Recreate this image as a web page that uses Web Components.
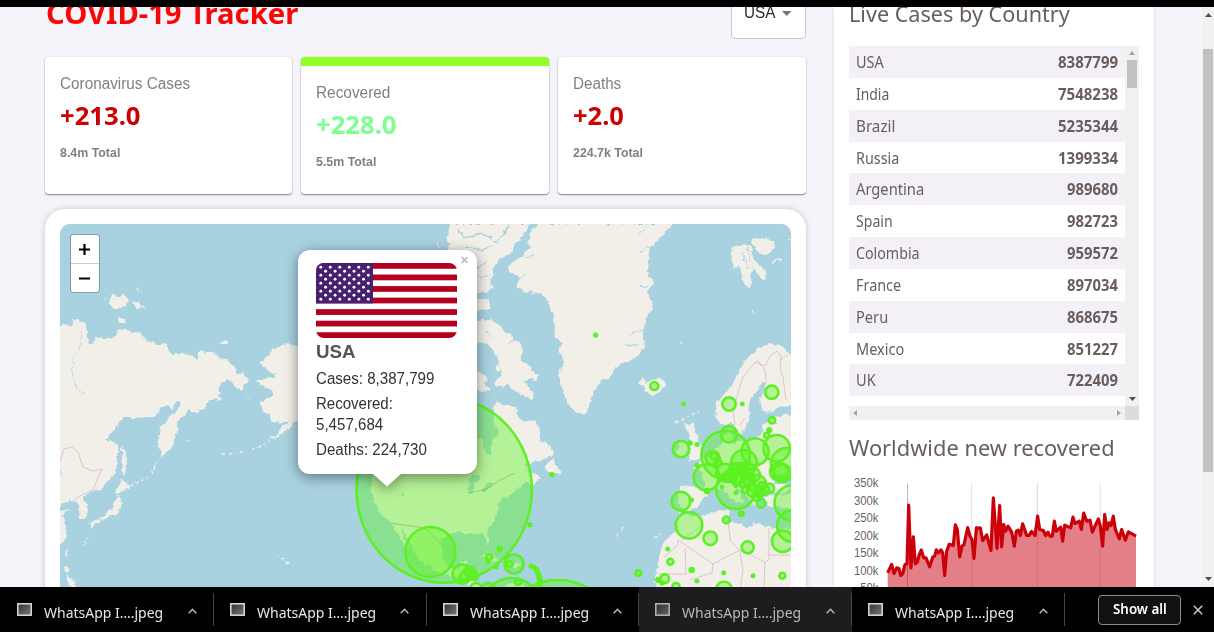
<!DOCTYPE html>
<html lang="en">
<head>
<meta charset="utf-8">
<title>COVID-19 Tracker</title>
<style>
html,body{margin:0;height:100%;overflow:hidden;background:#f5f4fa}
body{font-family:"Liberation Sans",Arial,sans-serif}
</style>
</head>
<body>
<tracker-app></tracker-app>
<script>
const UI = '"Noto Sans","Open Sans",sans-serif';
function define(name, html, setup) {
  const t = document.createElement('template');
  t.innerHTML = html;
  customElements.define(name, class extends HTMLElement {
    connectedCallback() {
      if (this.shadowRoot) return;
      this.attachShadow({mode: 'open'}).append(t.content.cloneNode(true));
      if (setup) setup.call(this, this.shadowRoot);
    }
  });
}

/* One line of text condensed to a given width. */
define('fit-text', `<style>
:host{display:block;white-space:nowrap;flex:none}
span{display:inline-block;transform-origin:0 50%}
</style><span><slot></slot></span>`, function (r) {
  const w = +this.getAttribute('w'), s = r.querySelector('span');
  this.style.width = w + 'px';
  const n = s.offsetWidth;
  if (n) s.style.transform = `scaleX(${w / n})`;
});

define('info-card', `<style>
:host{display:block;box-sizing:border-box;background:#fff;border-radius:4px;padding:17px 15px;
 box-shadow:0 1px 1.5px rgba(0,0,0,.45),0 0 2px rgba(0,0,0,.1);color:#808080}
:host([active]){border-top:9.5px solid #90ff28}
.t{font-size:16px;line-height:20px;height:20px}
.n{font:700 25px/34px ${UI};color:#cc0000;margin-top:4px}
:host([green]) .n{color:#7dff92}
.s{font-size:13px;line-height:16px;font-weight:700;margin-top:13px}
</style><div class="t"><slot></slot></div><div class="n"><slot name="n"></slot></div><div class="s"><slot name="s"></slot></div>`);

define('country-select', `<style>
:host{display:flex;box-sizing:border-box;width:75px;height:56px;border:1px solid #c9c9cd;border-radius:4px;background:#fff;
 align-items:center;padding:4px 12.5px 0 12.5px;justify-content:space-between;font-size:16px;color:#2a2a2a}
</style><fit-text w="31.5"><slot></slot></fit-text><svg width="10" height="5"><path d="M0 0H9.5L4.75 5Z" fill="#757575"/></svg>`);

const rows = [['USA',8387799,28,61],['India',7548238,33,61],['Brazil',5235344,39,61],['Russia',1399334,43,61],['Argentina',989680,68,52],['Spain',982723,37,52],['Colombia',959572,64,52],['France',897034,45,52],['Peru',868675,32,52],['Mexico',851227,48,52],['UK',722409,20,52],['South Africa',703793,82,52]];
define('country-table', `<style>
:host{display:grid;grid-template:360px 14px/276px 14px;overflow:hidden}
.rows{overflow:hidden;font:400 16px/33.4px ${UI};color:#6a5d5d}
.row{display:flex;justify-content:space-between;height:31.85px;padding:0 7.5px 0 7px}
.row:nth-child(odd){background:#f3f0f7}
.row:last-child{line-height:36px}
b{font-weight:700}
.v{background:#f1f1f1;display:flex;flex-direction:column;align-items:center}
.v svg:first-child{margin-top:5px}
.th{width:10px;height:28px;background:#c1c1c1;margin-top:5px}
.v svg:last-child{margin-top:auto;margin-bottom:5px}
.h{background:#f1f1f1;display:flex;justify-content:space-between;align-items:center;padding:0 4px}
.c{background:#dcdcdc}
</style><div class="rows">${rows.map(r=>`<div class="row"><fit-text w="${r[2]}">${r[0]}</fit-text><b><fit-text w="${r[3]-1}">${r[1]}</fit-text></b></div>`).join('')}</div>
<div class="v"><svg width="6" height="4"><path d="M0 4L3 0L6 4Z" fill="#a3a3a3"/></svg><div class="th"></div><svg width="7" height="4"><path d="M0 0H7L3.5 4Z" fill="#505050"/></svg></div>
<div class="h"><svg width="4" height="6"><path d="M4 0V6L0 3Z" fill="#a3a3a3"/></svg><svg width="4" height="6"><path d="M0 0V6L4 3Z" fill="#a3a3a3"/></svg></div><div class="c"></div>`);

/* Line chart of daily numbers; the vertices are in thirds of a pixel. */
const series = '173,580 185,555 192,582 200,565 207,567 212,588 218,583 225,555 231,553 236,377 243,565 250,472 256,553 262,548 268,525 274,511 281,535 288,535 299,562 308,533 314,530 319,511 325,520 333,511 338,520 344,588 350,515 358,494 370,498 376,436 382,450 389,532 396,500 402,495 413,444 420,470 426,480 432,537 439,445 451,446 458,483 470,466 483,513 490,355 501,507 509,378 515,502 521,435 527,455 534,440 545,458 553,500 559,455 565,452 571,468 578,433 590,468 597,468 605,456 615,468 623,410 629,450 640,453 647,468 654,458 660,470 667,470 673,425 679,455 692,443 698,485 704,437 722,445 729,413 735,432 748,425 754,450 761,401 770,425 780,422 787,458 805,418 811,440 818,500 824,405 831,450 837,430 843,438 850,410 856,450 868,478 875,450 886,482 895,457 918,470';
define('line-graph', `<style>:host{display:block;height:130px}svg{display:block}text{font:12px "Liberation Sans",sans-serif;fill:#666}</style>
<svg width="290" height="130" viewBox="849 473 290 130">
<g stroke="#000" stroke-width="1">${[[907.5,.28],[971.7,.12],[1037.3,.16],[1100.3,.12]].map(a=>`<path d="M${a[0]} 483.5V603" stroke-opacity="${a[1]}"/>`).join('')}</g>
<g transform="translate(830 379.5) scale(.33333)"><path d="M${series} 918,670 173,670Z" fill="#cc0010" fill-opacity=".5"/><polyline points="${series}" fill="none" stroke="#cc0008" stroke-width="9.5" stroke-linejoin="round"/></g>
${['350k','300k','250k','200k','150k','100k','50k'].map((t,i)=>`<text x="${i<6?854:860.2}" y="${(487+i*17.5).toFixed(1)}" textLength="${i<6?24.5:18.3}" lengthAdjust="spacingAndGlyphs">${t}</text>`).join('')}
</svg>`);

const land = [
 // Siberia and the Chinese coast
 'M50,325L60,325 71.7,325.7 72,319 78,320.7 85,322.7 87.7,328 86.7,335 90,342.7 93,345 95,337 103,339 110,338.7 115,337 116,330.7 125,328.7 131.7,333.3 136.7,332 141.7,335 146.7,341.7 156.7,344 166.7,344 169,351.7 173,357 175,354 183,354 190,355 196.7,359 198,351.7 211.7,352 221.7,358 233,365.7 237,374 243,373 249,380 244,385 241.7,390 235,387 231.7,381.7 226.7,378 224,383 218,388 220,396.7 221,401.7 215,398 210,401.7 204,408 196.7,413 188,411 183,416 178,420 177.7,433 173,443 169,451 161.7,457 157.7,443 160,428 168,418 176.7,411.7 181.7,401.7 175,403 173,410 168,405 161,408 155,416.7 135,418 123,418 108,438 104,440.7 111,441 118,446 118,460 115,471.7 107,482 101.7,489 93,490 83,496.7 88,505 87.7,516.7 80,519 79,506.7 75,503 70,499 60,506 60,511 70,509 61.7,516 66.7,526.7 66,536.7 60,546 50,550Z',
 // Sakhalin, Japan, Taiwan, Philippines
 'M122,444L124,450 127,462 125,475 121,473 122,460Z','M121,478L130,487 122,491 116,495 118,487Z','M118,495L121,503 118,513 110,517 103,520 99,518 107,513 113,509 116,502Z','M91,521L99,519 101,522 96,525Z','M90,521L95,523 92,529 89,525Z','M65,549L68,547 66,556 63,553Z','M65,565L69,568 67,575 74,580 78,588 70,588 66,577Z',
 // New Siberian islands, Wrangel
 'M111,294L118,296 123,295 129,300 127,306 119,309 113,309 108,303Z','M133,302L140,304 145,307 137,309 133,306Z','M118,317L125,319 126,323 119,323Z','M219,344L224,339 229,342 226,344Z',
 // Alaska and the Aleutians
 'M320,345L297,346 286,342.7 273,349 268,356.7 259,362.7 266.7,370 275,374 275,378 268,377 255,382 266.7,388 273,390 272,395 264,399 260,403 263,411 270,415 270,421.7 283,423 290,420 297,416 320,400Z','M243,396L251,398 249,399Z','M297,415L283,426 277,434 268,440 274,438 283,432 290,426 298,420Z',
 // Arctic archipelago
 'M450,224L445,238 450,243 447,250 476,292 486.7,293 494,288 490,283 494,276.7 491.7,270 496.7,263 503,256.7 513,251.7 516.7,241.7 523,236.7 530,224Z','M470,299L489,299 490,307 480,311 470,309Z','M470,325L481.7,320 490,320 498,323 503,330 511,336 520,343 523,350 520,360 530,367 538,375 536.7,381.7 531,379 523,381.7 533,391.7 531.7,400 523,396.7 516.7,391.7 506.7,385 496.7,386.7 495,380 503,376.7 498,361.7 493,350 486.7,343 470,342Z','M470,369L480,372 489,380 484,384 492,390 483,393 475,388Z','M496,365L501,366 500,370 496,371Z',
 // North America
 'M360,440L371.7,475 371.7,496.7 380,513 390,521.7 398,533 402,541 408,551 406,541 400,528 404,532 409,543 413,550 420,560 436.7,571.7 450,575 463,580 475,590 484,590 472,580 471,574 462,572 468,560 463,560 458,568 448,566.7 441.7,556.7 441.7,540 451.7,533 466.7,533 476,535 483,533 486.7,545 489,543 486.7,531.7 496.7,516.7 498,503 513,493 523,483 533,483 541,479 538,475 528,471.7 525,465 540,460 553,455 551.7,446.7 541.7,441.7 540,431.7 535,420 525,421.7 519,418 515,406.7 495,403 493,416 498,433 490,445 491.7,455 485,453 483,440 470,436Z','M545,470L550,460 554,458 555,466 561.7,472 558,474Z','M480,557L488,552 500,560 493,561Z','M505,564L518,562 521,567 508,567Z','M502,588L515,582 530,588Z',
 // Greenland
 'M538,224L530,233 528,241.7 530,248 523,255 516.7,260 509,265 510,271.7 520,276.7 516.7,286.7 523,291.7 540,293 546,298 550,306.7 554,320 555,338 563,343 557,350 565,363 559,373 561.7,386.7 570,406.7 577,412 585,416 588,410 591.7,396.7 598,383 610,376.7 618,366 636.7,356.7 644,348 643,336.7 645,320 653,306.7 648,293 653,281.7 646.7,270 650,246.7 660,238 671.7,224Z',
 // Svalbard, Iceland
 'M731,248L739,246 750,244 755,260 766.7,273 765,280 757,275 753,265 750,288 745,284 741.7,278 740,266.7 732.7,268Z','M751.7,240L763,236.7 774,241.7 775,247 766.7,255 756.7,251.7Z','M638,383L643,378 645,383 653,380 661.7,377.7 666,385 660,392 653,395 643,391.7 646,388Z',
 // Scandinavia, Britain
 'M800,352L790,354 783,346.7 770,343 756.7,350 743,361.7 735,380 723,396.7 716,403 717,421.7 723,425 731.7,421.7 736.7,433 741.7,434 746.7,425 750,413 748,403 758,390 761.7,381.7 767,381.7 760,400 762,411 771,412 783,407 800,406Z','M685,425L693,421.7 696,432 701.7,450 700,458 688,461 692,453 688,447 691,441Z','M678,444L684,441 688,446 686,455 677,456Z',
 // Europe, Turkey
 'M800,413L772,417 762,425 764,431 758,436.7 746.7,441.7 733,441.7 730,428 725,433 723,443 713,451.7 701.7,460 693,468 703,473 704,486.7 680,486 679,495 680,506.7 688,511.7 696.7,508 706.7,495 713,490 723,488 730,497 738,504 745,501.7 733,486.7 745,493 755,506.7 760,498 770,490 778,494 800,487Z','M763,496L800,493 800,512 785,508 768,506Z',
 // Africa
 'M678,512L695,516.7 706.7,513 725,510 730,511.7 728,520 733,521.7 748,528 753,523 766.7,526 775,529 800,528 800,600 660,600 656.7,587 655,577 658,566.7 658,557 665,540 676.7,531.7Z'
];
/* x, y, radius and, where the projection stretches it, vertical radius */
const circles = [
 [444.2,490,87.7,92.7],[430.3,552,25],[462,574,9.5],[465,577,5],[470,572,5],[474,576,4],[489,557,3],[488,562,1],[499.7,549,2],[496,566.7,1.6],[514,564,9.5],[509.7,564,3],[530,524.7,1.3],[552,474.7,1.3],[638.3,573,3],[531,566,1.3],[534,567.3,1.3],[536.6,570,1.6],[538.3,574,1.6],[539.3,577,1.8],[540,581,1.8],[539,585,1.8],[511.7,607,29],[558,640,60],[518,582,3],[476,589,6],[488,590,7],
 [595.7,335,1.3],[654.3,386,4],[683.7,404,1.2],[729,404,6.7],[742.3,404,1.2],[771.7,392.3,6.7],[772,420.3,3.2],[769.3,430,1.8],[766.7,435.3,2.6],[729,434.3,8.2],[725.7,455,24.3],[755,451.7,13.5],[776.7,448.3,13.3],[787,464,16],[744,463,13],[706.7,477.3,13],[736,489.3,19.8],[681,449,8.3],[690.3,443,1.3],[697,444.6,1.2],[697,465.3,1.3],[712.7,458,7],[718,463,3.5],[714,456,3.5],[725,472.7,9],[738,473,10],[779,471.7,9],[782,473,9],[731,476,6],[742,469,6],[737,479,6],[748,478,7],[757,484,9],[753,491,6],[759,492,5],[756,497,3.5],[749,469,5],[742,484,3],[753,475,7],[762,486,4],[745,490,3],[764,490,5],[736,468,5],[728,478,4],[681,501.3,9.4],[691.7,500,1.2],[689,525.3,13.3],[710.3,538.3,6.8],[726.3,520,3.4],[741.3,513.7,2.2],[747.7,547.3,6],[782.7,541.3,10.8],[792,503,17.5],[793,526,16],[761,503.3,4.2],[769.3,488.3,4.8],[667.7,549,1.2],[670.3,561.7,3],[691.7,570,2],[664.7,578.7,4.3],[658,580,1.8],[662,583,1.5],[723.7,572.7,1.2],[753,575.7,1.2],[782.3,575.7,3],[697,581,1.2],[676,586.5,3.5],[724,589,7.5],[707,491,2],[735.7,486,1],[735.7,493,1],[722,487,1]
];
define('world-map', `<style>
:host{display:block;position:relative;height:380px;border-radius:10px;background:#a9d2e1}
svg{display:block;border-radius:10px}
.zoom{position:absolute;left:10px;top:10px;border:1.5px solid rgba(60,80,90,.4);border-radius:4px;display:grid;grid-template-rows:28px 28px;row-gap:1px;width:28.5px;background:#ccc;background-clip:padding-box;overflow:hidden}
.zoom div{background:#fff;display:grid;place-items:center}
.zoom svg{border-radius:0}
</style>
<svg width="731" height="380" viewBox="60 224 731 380">
<defs><filter id="rough" x="0" y="0" width="100%" height="100%" filterUnits="objectBoundingBox"><feTurbulence type="fractalNoise" baseFrequency=".16" numOctaves="3" seed="4"/><feDisplacementMap in="SourceGraphic" scale="6" xChannelSelector="R" yChannelSelector="G"/></filter></defs>
<g filter="url(#rough)"><rect x="50" y="214" width="760" height="400" fill="#a9d2e1"/>
<path d="${land.join('')}" fill="#f2efe9"/>
<g fill="#a9d2e1"><path d="M469,478L477,474 481,480 475,483 473,493 468,491Z M482,488L491,482 493,486 483,492Z M773,478L785,473 800,478 800,484 775,484Z M400,494L404,495 402,497Z"/></g>
<g fill="none" stroke="#a9d2e1" stroke-width="1.6"><path d="M458,228Q462,240 474,236T492,240T508,226"/><path d="M466,246L480,250 492,246M476,268L486,262M476,278L488,276" stroke-width="1.2"/><path d="M524,258L534,256M518,278L526,276M626,345L640,346M630,334L644,330M640,252L651,246M640,234L648,224M640,288L650,284M557,350L562,356M485,330L492,338M507,345L514,340" stroke-width="1"/><path d="M82,330L81,345 74,358 72,372 76,387 84,394" stroke-width=".7"/><path d="M742,252L748,270M748,247L750,262" stroke-width="1"/></g>
<g fill="none" stroke="#f2efe9" stroke-width="1.4" stroke-dasharray="3 3"><path d="M222,454Q255,454 280,434"/><path d="M130,486L150,476 160,458M83,545L90,535M185,440L190,442M276,555L288,563"/><path d="M105,299L106,300M136,288L142,290M437,241L439,248M676,422L699,412M622,528L618,536M655,538L662,532"/></g>
<path d="M772,262L782,260M680,342L682,343M752,312L755,313M788,241L795,241" stroke="#f2efe9" stroke-width="1.5"/>
</g>
<g fill="none" stroke="#c8a0b8" stroke-width=".7" stroke-opacity=".75"><path d="M60,462L64,449 72,447 78,452 83,467 93,471 102,469 98,478 93,490 80,496 74,500M60,470L62,475"/><path d="M735,425L733,410 738,393 743,377 755,362 765,366 770,356 777,351 781,356 780,368 783,377 786,400M757,360L765,370 766,381M780,360L788,355"/><path d="M390,523L425,528 442,545M467,493L485,490 500,480 515,473" stroke="#777"/><path d="M678,540L678,545 664,557M678,540L713,564 740,550 765,562 769,560 769,528M728,520L730,540 740,551 743,570 740,590M685,548L686,574 658,574M713,564L712,573 690,580M765,562L764,587M769,555H790M701,515L702,525 682,540M745,418L740,425M765,420L778,424"/></g>
<g fill="#5af519" fill-opacity=".4" stroke="#5df024" stroke-width="2.6">${circles.map(c=>`<ellipse cx="${c[0]}" cy="${c[1]}" rx="${c[2]}" ry="${c[3]||c[2]}"${c[2]<2.1?' fill-opacity="1"':''}/>`).join('')}</g>
</svg>
<div class="zoom"><div><svg width="11" height="11"><path d="M5.5 0V11M0 5.5H11" stroke="#000" stroke-width="2.2"/></svg></div><div><svg width="11" height="3"><path d="M0 1.5H11" stroke="#000" stroke-width="2.2"/></svg></div></div>
<slot></slot>`);

const stars = Array.from({length:9},(_,r)=>Array.from({length:r%2?5:6},(_,c)=>`<circle cx="${(4.8+c*9.5+(r%2?4.75:0)).toFixed(1)}" cy="${(4.2+r*4).toFixed(1)}" r="1.45"/>`).join('')).join('');
define('us-flag', `<style>:host{display:block;width:141px;height:75px;border-radius:8px;overflow:hidden}svg{display:block}</style>
<svg width="141" height="75"><rect width="141" height="75" fill="#fff"/>
${[0,1,2,3,4,5,6].map(i=>`<rect y="${(i*11.54).toFixed(2)}" width="141" height="5.77" fill="#b3001e"/>`).join('')}
<rect width="57" height="40.4" fill="#47206f"/><g fill="#fff">${stars}</g></svg>`);

define('map-popup', `<style>
:host{position:absolute;left:238px;top:26px;width:179px;height:224px;box-sizing:border-box;background:#fff;border-radius:12px;padding:13px 18px 0 18.5px;
 filter:drop-shadow(0 3px 7px rgba(0,0,0,.45));color:#333;font-size:16px;line-height:20.6px}
.tip{position:absolute;left:75px;top:223.5px;display:block}
.x{position:absolute;right:8.5px;top:6px}
h3{font-size:19px;line-height:22px;margin:3px 0 6px;color:#555}
</style><us-flag></us-flag><h3><slot name="title"></slot></h3><slot></slot>
<svg class="tip" width="28" height="13"><path d="M0 0H28L14 12.5Z" fill="#fff"/></svg>
<svg class="x" width="7" height="8"><path d="M.7 1L6.3 7M6.3 1L.7 7" stroke="#bbb" stroke-width="1.8"/></svg>`);

define('page-scrollbar', `<style>:host{width:12px;background:#f1f1f1;display:flex;flex-direction:column;align-items:center;flex:none}
.th{width:10px;height:423px;background:#c1c1c1;margin-top:32px}svg:first-of-type{margin-top:6px}svg:last-child{margin-top:auto;margin-bottom:6px}</style>
<svg width="7" height="4"><path d="M0 4L3.5 0L7 4Z" fill="#505050"/></svg><div class="th"></div><svg width="7" height="4"><path d="M0 0H7L3.5 4Z" fill="#505050"/></svg>`);

define('download-item', `<style>
:host{display:flex;flex:none;box-sizing:border-box;width:212.75px;height:45px;align-items:center;padding-left:16px;color:#e8e8e8;font:400 14.5px/20px ${UI};
 background:linear-gradient(#444,#444) right 6px/1px 33px no-repeat}
:host([hot]){background-color:#1d1d20;color:#b9b9bb}
:host([hot]) .i{opacity:.8}
.i{margin-right:12px}fit-text{margin-top:4px}.c{margin-left:24px;margin-top:2px}
</style><svg class="i" width="15" height="13"><defs><linearGradient id="g" x2="1" y2="1"><stop stop-color="#333"/><stop offset="1" stop-color="#777"/></linearGradient></defs><rect x=".8" y=".8" width="13.4" height="11.4" fill="url(#g)" stroke="#ddd" stroke-width="1.5"/></svg>
<fit-text w="119.5">WhatsApp I….jpeg</fit-text>
<svg class="c" width="9" height="6"><path d="M.7 5.3L4.5 1.2L8.3 5.3" fill="none" stroke="#bbb" stroke-width="1.4"/></svg>`);

define('download-bar', `<style>
:host{display:flex;height:45px;background:#000;flex:none}
download-item:first-of-type{margin-left:1px}
.all{box-sizing:border-box;width:83px;height:30px;border:1px solid #8d8d8d;border-radius:4px;background:#111;margin:8px 12px 0 33px;color:#fff;display:flex;justify-content:center;font:600 13.5px/27px ${UI}}
.x{margin-top:18px}
</style><download-item></download-item><download-item></download-item><download-item></download-item><download-item hot></download-item><download-item></download-item>
<div class="all"><fit-text w="53.5">Show all</fit-text></div><svg class="x" width="10" height="10"><path d="M.8 .8L9.2 9.2M9.2 .8L.8 9.2" stroke="#ccc" stroke-width="1.5"/></svg>`);

define('tracker-app', `<style>
:host{display:flex;flex-direction:column;height:632px;width:1214px;overflow:hidden}
.top{height:7px;background:#000;flex:none}
.view{height:580px;display:flex;overflow:hidden;background:#f5f4fa}
main{width:761px;margin-left:44.5px;flex:none}
header{display:flex;justify-content:space-between;height:50px}
header country-select{margin-top:-24px}
h1{font:700 29px/40px ${UI};color:#f90606;margin:-14px 0 0 1px}
.cards{display:grid;grid-template-columns:repeat(3,1fr);gap:9px;height:137px}
.map{margin-top:15px;background:#fff;border-radius:20px;padding:15px;box-shadow:0 0 7px -1px rgba(0,0,0,.26)}
aside{width:290px;flex:none;background:#fff;margin-left:28.5px;padding:0 15px;box-shadow:0 0 3px rgba(0,0,0,.14)}
h2{font:400 22.5px/30px ${UI};color:#6a5d5d;margin:-8px 0 17px}
h2+country-table+h2{margin:13px 0 10px}
page-scrollbar{margin-left:auto}
p{margin:0 0 4.8px}
</style>
<div class="top"></div>
<div class="view">
<main><header><h1><fit-text w="252">COVID-19 Tracker</fit-text></h1><country-select>USA</country-select></header>
<div class="cards">
<info-card><fit-text w="130">Coronavirus Cases</fit-text><fit-text w="81" slot="n">+213.0</fit-text><fit-text w="60" slot="s">8.4m Total</fit-text></info-card>
<info-card active green><fit-text w="74">Recovered</fit-text><fit-text w="81" slot="n">+228.0</fit-text><fit-text w="60" slot="s">5.5m Total</fit-text></info-card>
<info-card><fit-text w="48.5">Deaths</fit-text><fit-text w="51" slot="n">+2.0</fit-text><fit-text w="69.5" slot="s">224.7k Total</fit-text></info-card>
</div>
<div class="map"><world-map><map-popup><fit-text slot="title" w="39.5">USA</fit-text><p><fit-text w="118">Cases: 8,387,799</fit-text></p><p><fit-text w="77">Recovered:</fit-text><fit-text w="67">5,457,684</fit-text></p><p><fit-text w="110.5">Deaths: 224,730</fit-text></p></map-popup></world-map></div>
</main>
<aside><h2><fit-text w="221">Live Cases by Country</fit-text></h2><country-table></country-table><h2><fit-text w="266">Worldwide new recovered</fit-text></h2><line-graph></line-graph></aside>
<page-scrollbar></page-scrollbar>
</div>
<download-bar></download-bar>`);
</script>
</body>
</html>
